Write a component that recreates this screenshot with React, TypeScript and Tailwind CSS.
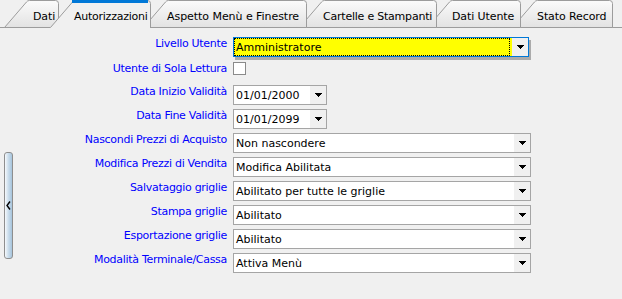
import React from "react";

type TabDef = { label: string; cls: string; pl: string; W: number; sel?: boolean };

const tabs: TabDef[] = [
  { label: "Dati", cls: "w-[55px] z-[6]", pl: "pl-[29px] tracking-[-0.1px]", W: 55 },
  { label: "Autorizzazioni", cls: "w-[101px] -ml-[9px] z-[10]", pl: "pl-[24px] tracking-[-0.25px]", W: 101, sel: true },
  { label: "Aspetto Menù e Finestre", cls: "w-[164px] -ml-[8px] z-[5]", pl: "pl-[24px] tracking-[-0.05px]", W: 164 },
  { label: "Cartelle e Stampanti", cls: "w-[138px] -ml-[8px] z-[4]", pl: "pl-[24px] tracking-[-0.22px]", W: 138 },
  { label: "Dati Utente", cls: "w-[94px] -ml-[10px] z-[3]", pl: "pl-[25px] tracking-[-0.1px]", W: 94 },
  { label: "Stato Record", cls: "w-[101px] -ml-[9px] z-[2]", pl: "pl-[25px] tracking-[-0.1px]", W: 101 },
];

function Tab({ t, i }: { t: TabDef; i: number }) {
  const W = t.W;
  const outline = `M0.5 27.5 L22.5 2 Q23.5 0.5 25.5 0.5 H${W - 3.5} Q${W - 0.5} 0.5 ${W - 0.5} 3.5 V27.5`;
  return (
    <div className={`relative h-[28px] shrink-0 ${t.cls}`}>
      <svg className="absolute left-0 top-0" width={W} height={28} viewBox={`0 0 ${W} 28`}>
        <defs>
          <linearGradient id={`tg${i}`} x1="0" y1="0" x2="0" y2="1">
            <stop offset="0" stopColor="#fbfbfb" />
            <stop offset="1" stopColor="#e2e2e2" />
          </linearGradient>
        </defs>
        {t.sel ? (
          <>
            <path d={`M0 28 L0.5 27.5 L22.5 2 Q23.5 0.5 25.5 0.5 H${W - 3.5} Q${W - 0.5} 0.5 ${W - 0.5} 3.5 V28 Z`} fill="#f0f0f0" />
            <path d={`M0.5 27.5 L22.5 2 Q23.5 0.5 25.5 0.5 H${W - 3.5} Q${W - 0.5} 0.5 ${W - 0.5} 3.5 V28`} fill="none" stroke="#9c9c9c" strokeWidth="1" />
            <rect x="22" y="0" width={W - 25} height="3" fill="#0078d7" />
          </>
        ) : (
          <path d={outline + " Z"} fill={`url(#tg${i})`} stroke="#9c9c9c" strokeWidth="1" />
        )}
      </svg>
      <div className={`relative ${t.pl} pt-[10px] leading-[14px] whitespace-nowrap text-black`}>
        {t.label}
      </div>
    </div>
  );
}

function Arrow() {
  return (
    <svg width="7" height="4" viewBox="0 0 7 4">
      <path d="M0 0h7v1h-1v1h-1v1h-1v1h-1v-1h-1v-1h-1v-1h-1z" fill="#000" />
    </svg>
  );
}

function Label({ children }: { children: React.ReactNode }) {
  return (
    <div className="w-[211px] shrink-0 text-right leading-[14px] text-[#0000ff] tracking-[-0.3px] whitespace-nowrap">
      {children}
    </div>
  );
}

function Combo({ value, wide = true }: { value: string; wide?: boolean }) {
  return (
    <div className={`h-[20px] border border-[#a5a5a5] bg-white flex ${wide ? "w-[298px]" : "w-[94px]"}`}>
      <div className="flex-1 pl-[2px] pt-[3px] leading-[14px] whitespace-nowrap text-black overflow-hidden">{value}</div>
      <div className="w-[16px] bg-[#f0f0f0] flex items-center justify-center">
        <Arrow />
      </div>
    </div>
  );
}

const combos: [string, string][] = [
  ["Nascondi Prezzi di Acquisto", "Non nascondere"],
  ["Modifica Prezzi di Vendita", "Modifica Abilitata"],
  ["Salvataggio griglie", "Abilitato per tutte le griglie"],
  ["Stampa griglie", "Abilitato"],
  ["Esportazione griglie", "Abilitato"],
  ["Modalità Terminale/Cassa", "Attiva Menù"],
];

export default function App() {
  return (
    <div className="w-[622px] h-[299px] overflow-hidden bg-[#f0f0f0] font-['DejaVu_Sans',sans-serif] text-[11px] text-black">
      {/* tab strip */}
      <div className="h-[28px] border-b border-[#9c9c9c] flex items-start pl-[4px]">
        {tabs.map((t, i) => (
          <Tab key={t.label} t={t} i={i} />
        ))}
      </div>

      {/* body */}
      <div className="flex items-start">
        <div className="w-[16px] shrink-0 pl-[4px] pt-[124px]">
          <div className="w-[9px] h-[107px] rounded-[3px] border border-[#8e8e8e] bg-gradient-to-r from-[#f6f9fc] via-[#c9dceb] to-[#a6c4dc] flex items-center justify-start pl-[1px]">
            <svg width="5" height="9" viewBox="0 0 5 9">
              <polyline points="4,0.5 1,4.5 4,8.5" fill="none" stroke="#000" strokeWidth="1.4" />
            </svg>
          </div>
        </div>

        <div className="flex flex-col">
          <div className="flex items-start gap-[6px] mt-[9px]">
            <Label>Livello Utente</Label>
            <div className="w-[296px] h-[20px] border border-[#0078d7] bg-[#ffff00] flex shadow-[2px_3px_0_0_#ababab]">
              <div className="flex-1 border border-dotted border-black pl-[1px] pt-[2px] leading-[14px] whitespace-nowrap text-black">
                Amministratore
              </div>
              <div className="w-[2px]" />
              <div className="w-[16px] bg-[#f0f0f0] flex items-center justify-center">
                <Arrow />
              </div>
            </div>
          </div>

          <div className="flex items-start gap-[6px] mt-[5px]">
            <Label>Utente di Sola Lettura</Label>
            <div className="w-[13px] h-[13px] bg-white border border-[#8a8a8a]" />
          </div>

          <div className="flex items-start gap-[6px] mt-[9px]">
            <Label>Data Inizio Validità</Label>
            <Combo value="01/01/2000" wide={false} />
          </div>

          <div className="flex items-start gap-[6px] mt-[4px]">
            <Label>Data Fine Validità</Label>
            <Combo value="01/01/2099" wide={false} />
          </div>

          {combos.map(([l, v]) => (
            <div key={l} className="flex items-start gap-[6px] mt-[4px]">
              <Label>{l}</Label>
              <Combo value={v} />
            </div>
          ))}
        </div>
      </div>
    </div>
  );
}
